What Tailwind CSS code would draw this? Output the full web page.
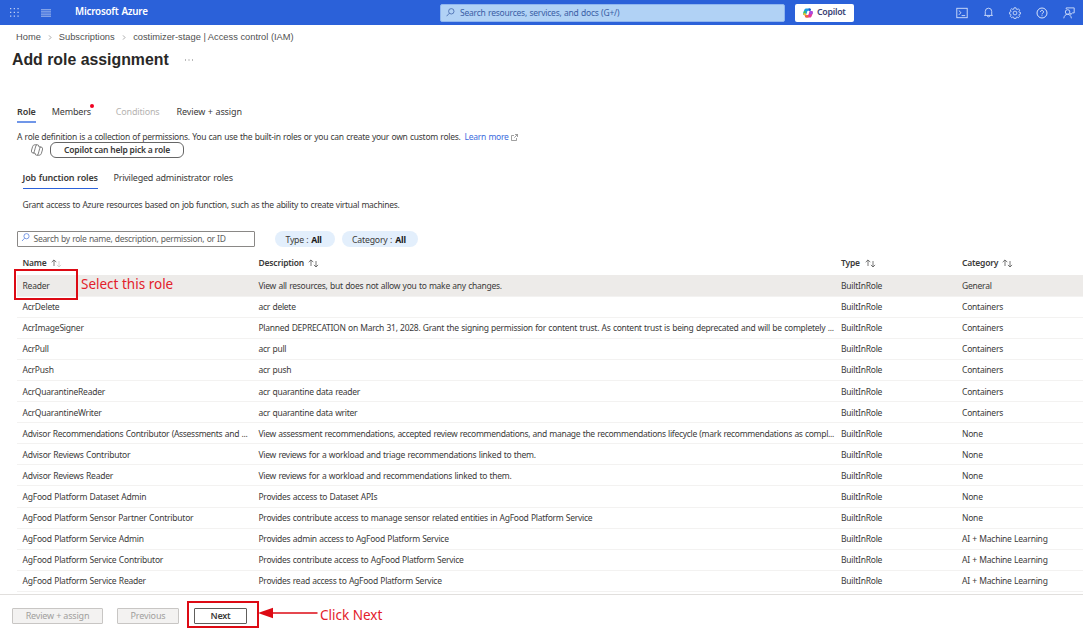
<!DOCTYPE html>
<html lang="en">
<head>
<meta charset="utf-8">
<title>Add role assignment - Microsoft Azure</title>
<script src="https://cdn.jsdelivr.net/npm/@tailwindcss/browser@4"></script>
</head>
<body class="bg-white">
<div class="relative flex h-[633px] w-[1083px] flex-col overflow-hidden bg-white font-['Noto_Sans',sans-serif] text-[8.5px] leading-3 tracking-[-0.265px] [word-spacing:0.45px] whitespace-nowrap text-[#3b3a39]">

  <header class="flex h-[25px] shrink-0 items-center bg-[#2b61d9] text-white">
    <svg class="ml-[10px] size-[9px] opacity-70" viewBox="0 0 9 9" fill="white"><path d="M0 0h1.300v1.300H0zM3.700 0h1.300v1.300H3.700zM7.400 0h1.300v1.300H7.400zM0 3.700h1.300v1.300H0zM3.700 3.700h1.300v1.300H3.700zM7.400 3.700h1.300v1.300H7.400zM0 7.400h1.300v1.300H0zM3.700 7.400h1.300v1.300H3.700zM7.400 7.400h1.300v1.300H7.400z"/></svg>
    <svg class="ml-[22px] h-[8px] w-[10px] opacity-75" viewBox="0 0 10 8" stroke="white" stroke-width=".8"><path d="M0 .8h10M0 2.900h10M0 5.100h10M0 7.200h10"/></svg>
    <div class="ml-[24px] w-[365px] pb-px text-[9.800px] font-semibold tracking-[-0.2px]">Microsoft Azure</div>
    <div class="flex h-[18px] w-[345px] items-center rounded-[2px] border border-[#8fb5ef] bg-[#b1d2f5] pl-[5px] text-[#3a5ea5]">
      <svg class="size-[9px]" viewBox="0 0 9 9" fill="none" stroke="#3a5ea5" stroke-width=".75"><circle cx="5.300" cy="3.300" r="2.700"/><path d="M3.300 5.300.6 8.200"/></svg>
      <span class="ml-[5px] tracking-[-0.22px]">Search resources, services, and docs (G+/)</span>
    </div>
    <div class="ml-[10px] flex h-[18px] w-[59px] items-center rounded-[2px] bg-white pl-[8px] text-[8.800px] font-semibold tracking-[-0.28px] text-[#3b4275]">
      <svg class="size-[10px]" viewBox="0 0 20 20"><path d="M7 1h6c2 0 2.500 1 3 3l-7 2-3 8H3C0 14 0 11 1 8l2-5c1-2 2-2 4-2Z" fill="#1b9de2"/><path d="M6 6 3 14c-1 1-3-1-2-4l1-4Z" fill="#3fc75b"/><path d="M1 10l5 1 1 5-4-1C1 14 0 12 1 10Z" fill="#f4c430"/><path d="M13 19H7c-2 0-3-1-3.500-4l7-1 3-8H17c3 0 3 3 2 6l-2 5c-1 2-2 2-4 2Z" fill="#e5389b"/><path d="M13.500 6H17c3 0 3 3 2 6l-6 1Z" fill="#a54be0"/><path d="M4 15l6-1 1 5H7c-2 0-3-1-3-4Z" fill="#f36b32"/><path d="M11 1h2c2 0 2.500 1 3 4l-4 1Z" fill="#2350c8"/><path d="M9 7h3l-2 6H7.500Z" fill="white"/></svg>
      <span class="ml-[4px] pb-px">Copilot</span>
    </div>
    <div class="ml-[102px] flex items-center gap-[14.900px]">
      <svg class="size-[12px]" viewBox="0 0 12 12" fill="none" stroke="#d4e1fa" stroke-width=".9"><rect x=".8" y="1.300" width="10.400" height="9.400"/><path d="M2.800 3.500 5 5.700 2.800 7.900M5.600 8.600h3.600"/></svg>
      <svg class="size-[11px]" viewBox="0 0 12 12" fill="none" stroke="#d4e1fa" stroke-width=".95"><path d="M2.500 9V4.800a3.500 3.500 0 0 1 7 0V9M1.300 9.200h9.400M4.700 9.500a1.300 1.300 0 0 0 2.600 0"/></svg>
      <svg class="size-[12px]" viewBox="0 0 12 12" fill="none" stroke="#d4e1fa" stroke-width=".85" stroke-linejoin="round"><circle cx="6" cy="6" r="1.900"/><path d="m5 .8h2l.3 1.400.8.4 1.300-.8 1.300 1.400-.8 1.200.3.8 1.400.3v1.500l-1.400.3-.3.900.8 1.200L9.300 10.700 8 9.900l-.8.400L7 11.600H5l-.3-1.400-.8-.3-1.200.8-1.400-1.400.8-1.200-.4-.9L.400 7V5.300L1.700 5l.4-.8L1.300 3l1.400-1.300 1.200.8.8-.3Z"/></svg>
      <svg class="size-[12px]" viewBox="0 0 12 12" fill="none" stroke="#e2ebfc" stroke-width=".95"><circle cx="6" cy="6" r="5"/><path d="M4.500 4.800a1.500 1.500 0 1 1 2.300 1.300C6.200 6.500 6 6.700 6 7.400M6 8.300v.9"/></svg>
      <svg class="size-[12px]" viewBox="0 0 12 12" fill="none" stroke="#d4e1fa" stroke-width=".9"><circle cx="4.600" cy="5" r="2.300"/><path d="M.8 11.300c.2-2.400 1.800-4 3.800-4s3.500 1.500 3.800 4M3.200 2V.9h8v5H9.500L7.700 7.600V6"/></svg>
    </div>
  </header>

  <nav class="mt-[6px] flex h-3 shrink-0 items-center pl-[16px] font-['Liberation_Sans',sans-serif] text-[9.300px] tracking-normal [word-spacing:0] text-[#505050]">
    <span>Home</span>
    <svg class="mx-[7px] h-[5px] w-[4px]" viewBox="0 0 4 5" fill="none" stroke="#888" stroke-width=".7"><path d="M1 .4 3 2.500 1 4.600"/></svg>
    <span>Subscriptions</span>
    <svg class="mr-[7px] ml-[7.500px] h-[5px] w-[4px]" viewBox="0 0 4 5" fill="none" stroke="#888" stroke-width=".7"><path d="M1 .4 3 2.500 1 4.600"/></svg>
    <span>costimizer-stage | Access control (IAM)</span>
  </nav>

  <div class="mt-[7px] flex h-5 shrink-0 items-center pl-[12px]">
    <h1 class="w-[173px] font-['Liberation_Sans',sans-serif] text-[15.850px] font-bold tracking-normal [word-spacing:0] text-[#292827]">Add role assignment</h1>
    <svg class="h-[2px] w-[9px]" viewBox="0 0 9 2" fill="#777"><path d="M0 .5h1v1H0zM3.500 .5h1v1h-1zM7 .5h1v1H7z"/></svg>
  </div>

  <div class="mt-[36px] flex h-[17px] shrink-0 items-start pl-[17px] text-[9px] tracking-[-0.18px]">
    <div class="mr-[16px] h-[17px] border-b-2 border-[#7096e8] font-semibold tracking-[-0.1px]">Role</div>
    <div class="relative mr-[25px]">Members<span class="absolute -top-[2px] -right-[3px] size-[3.500px] rounded-full bg-[#f00020]"></span></div>
    <div class="mr-[17px] text-[#b5b3b1]">Conditions</div>
    <div class="tracking-[-0.12px]">Review + assign</div>
  </div>

  <div class="mt-[8px] flex h-3 shrink-0 items-center pl-[17px]">
    <span>A role definition is a collection of permissions. You can use the built-in roles or you can create your own custom roles.</span>
    <a class="ml-[4px] text-[#3c6bdd]">Learn more</a>
    <svg class="ml-[2px] size-[7px]" viewBox="0 0 7 7" fill="none" stroke="#777" stroke-width=".7"><path d="M3 1.500H.5v5h5V4M4 .5h2.500V3M6.500.5 3.300 3.700"/></svg>
  </div>
  <div class="-mt-px flex h-4 shrink-0 items-center pl-[31px]">
    <svg class="size-[12px]" viewBox="0 0 12 12" fill="none" stroke="#555" stroke-width=".75" stroke-linejoin="round"><path d="M4 9H2.200C.4 9 .2 7.500.6 6l1-3.300C2.100 1.300 2.700.8 3.900.8h2.600c.8 0 1.100.5 1.300 1.200L8 3M5.800.8C4.900 1.200 4.700 2.300 4.200 4.200L3.300 7.500C3 8.600 2.800 9 2.200 9M8 3h1.800c1.800 0 2 1.500 1.600 3l-1 3.300c-.5 1.400-1.100 1.900-2.300 1.900H5.500c-.8 0-1.100-.5-1.300-1.200L4 9M6.200 11.200c.9-.4 1.100-1.500 1.600-3.400l.9-3.300C9 3.400 9.200 3 9.800 3"/></svg>
    <button class="ml-[7px] h-4 w-[134px] rounded-[6px] border border-[#666] bg-white pb-px text-[8.500px] leading-3 font-semibold tracking-[-0.2px]">Copilot can help pick a role</button>
  </div>

  <div class="mt-[14px] flex h-[17px] shrink-0 items-start pl-[22.500px] text-[9px] tracking-[-0.22px]">
    <div class="mr-[15.500px] h-[17px] border-b border-[#2b61d9] font-semibold tracking-[-0.14px]">Job function roles</div>
    <div>Privileged administrator roles</div>
  </div>

  <p class="mt-[10px] h-3 shrink-0 pl-[22.500px] tracking-[-0.295px]">Grant access to Azure resources based on job function, such as the ability to create virtual machines.</p>

  <div class="mt-[20px] flex h-4 shrink-0 items-center pl-[17px]">
    <div class="flex h-4 w-[238px] items-center rounded-[1px] border border-[#8a8886] pl-[3px] text-[#605e5c]">
      <svg class="mb-[3px] size-[9px]" viewBox="0 0 9 9" fill="none" stroke="#5b83e0" stroke-width=".8"><circle cx="5.500" cy="3.200" r="2.600"/><path d="M3.600 5.200 1 8"/></svg>
      <span class="ml-[3.500px] tracking-[-0.29px]">Search by role name, description, permission, or ID</span>
    </div>
    <div class="ml-[20px] flex h-4 w-[60px] items-center gap-[3px] rounded-full bg-[#e3effc] pt-[2px] pl-[10.500px] text-[8.700px]"><span>Type :</span><b class="text-[#1b1a19]">All</b></div>
    <div class="ml-[7px] flex h-4 w-[76px] items-center gap-[3px] rounded-full bg-[#e3effc] pt-[2px] pl-[10px] text-[8.700px] tracking-[-0.18px]"><span>Category :</span><b class="text-[#1b1a19]">All</b></div>
  </div>

  <main class="ml-[17px] flex h-[347px] shrink-0 flex-col overflow-hidden">
    <div class="grid h-[28px] shrink-0 grid-cols-[236px_582.500px_121px_1fr] items-center pt-[4px] pl-[5.500px] font-semibold tracking-[-0.18px]">
      <div class="flex items-center gap-[4px]">Name <svg class="h-[9px] w-[11px]" viewBox="0 0 11 9" fill="none" stroke-width=".8"><path stroke="#555" d="M3 7V1M.7 3.200 3 .9l2.300 2.300"/><path stroke="#ccc" d="M8 2v6M5.900 5.900 8 8l2.100-2.100"/></svg></div>
      <div class="flex items-center gap-[4px]">Description <svg class="h-[9px] w-[11px]" viewBox="0 0 11 9" fill="none" stroke="#555" stroke-width=".8"><path d="M3 7V1M.7 3.200 3 .9l2.300 2.300M8 2v6M5.900 5.900 8 8l2.100-2.100"/></svg></div>
      <div class="flex items-center gap-[5px]">Type <svg class="h-[9px] w-[11px]" viewBox="0 0 11 9" fill="none" stroke="#555" stroke-width=".8"><path d="M3 7V1M.7 3.200 3 .9l2.300 2.300M8 2v6M5.900 5.900 8 8l2.100-2.100"/></svg></div>
      <div class="flex items-center gap-[4px]">Category <svg class="h-[9px] w-[11px]" viewBox="0 0 11 9" fill="none" stroke="#555" stroke-width=".8"><path d="M3 7V1M.7 3.200 3 .9l2.300 2.300M8 2v6M5.900 5.900 8 8l2.100-2.100"/></svg></div>
    </div>
    <div id="rows" class="flex flex-col"></div>
  </main>

  <footer class="flex h-[39px] shrink-0 items-center border-t border-[#e1dfdd] pt-[4px] pl-[12px]">
    <button class="h-4 w-[91px] rounded-[1px] border border-[#c8c6c4] bg-[#f3f2f1] text-[9px] leading-3 tracking-[-0.18px] text-[#a19f9d]">Review + assign</button>
    <button class="ml-[14px] h-4 w-[62px] rounded-[1px] border border-[#c8c6c4] bg-[#f3f2f1] text-[9px] leading-3 tracking-[-0.12px] text-[#a19f9d]">Previous</button>
    <button class="ml-[15px] h-4 w-[53px] rounded-[1px] border border-[#605e5c] bg-white text-[9px] leading-3 font-semibold">Next</button>
  </footer>

  <!-- Walkthrough annotations -->
  <div class="absolute top-[269px] left-[14px] h-[31px] w-[64px] border-2 border-[#dd0a14]"></div>
  <div class="absolute top-[275px] left-[81px] text-[13.500px] leading-[18px] tracking-normal [word-spacing:0] text-[#e3202a]">Select this role</div>
  <div class="absolute top-[601px] left-[187px] h-[27px] w-[72px] border-2 border-[#dd0a14]"></div>
  <svg class="absolute top-[607px] left-[258px] h-[12px] w-[60px]" viewBox="0 0 60 12"><path d="M0 6 15 .7v10.600Z" fill="#dd0a14"/><path d="M14 6h45.500" stroke="#dd0a14" stroke-width="1.700"/></svg>
  <div class="absolute top-[606px] left-[320px] text-[13.500px] leading-[18px] tracking-normal [word-spacing:0] text-[#e3202a]">Click Next</div>
</div>
<script>
const rows = [
  ["Reader", "View all resources, but does not allow you to make any changes.", "General"],
  ["AcrDelete", "acr delete", "Containers"],
  ["AcrImageSigner", "Planned DEPRECATION on March 31, 2028. Grant the signing permission for content trust. As content trust is being deprecated and will be completely ...", "Containers"],
  ["AcrPull", "acr pull", "Containers"],
  ["AcrPush", "acr push", "Containers"],
  ["AcrQuarantineReader", "acr quarantine data reader", "Containers"],
  ["AcrQuarantineWriter", "acr quarantine data writer", "Containers"],
  ["Advisor Recommendations Contributor (Assessments and ...", "View assessment recommendations, accepted review recommendations, and manage the recommendations lifecycle (mark recommendations as compl...", "None"],
  ["Advisor Reviews Contributor", "View reviews for a workload and triage recommendations linked to them.", "None"],
  ["Advisor Reviews Reader", "View reviews for a workload and recommendations linked to them.", "None"],
  ["AgFood Platform Dataset Admin", "Provides access to Dataset APIs", "None"],
  ["AgFood Platform Sensor Partner Contributor", "Provides contribute access to manage sensor related entities in AgFood Platform Service", "None"],
  ["AgFood Platform Service Admin", "Provides admin access to AgFood Platform Service", "AI + Machine Learning"],
  ["AgFood Platform Service Contributor", "Provides contribute access to AgFood Platform Service", "AI + Machine Learning"],
  ["AgFood Platform Service Reader", "Provides read access to AgFood Platform Service", "AI + Machine Learning"],
];
document.getElementById("rows").innerHTML = rows.map(([name, desc, cat], i) =>
  `<div class="${i === 0 ? "h-[21.600px] bg-[#edebe9]" : "h-[21.100px] bg-white"} grid shrink-0 grid-cols-[236px_582.500px_121px_1fr] items-center border-b border-[#f3f2f1] pt-[1px] pl-[5.500px]"><span class="${i === 7 ? "tracking-[-0.29px]" : "tracking-[-0.22px]"}">${name}</span><span class="${i === 7 ? "tracking-[-0.3px]" : "tracking-[-0.27px]"}">${desc}</span><span class="tracking-[-0.24px]">BuiltInRole</span><span class="tracking-[-0.24px]">${cat}</span></div>`
).join("");
</script>
</body>
</html>
